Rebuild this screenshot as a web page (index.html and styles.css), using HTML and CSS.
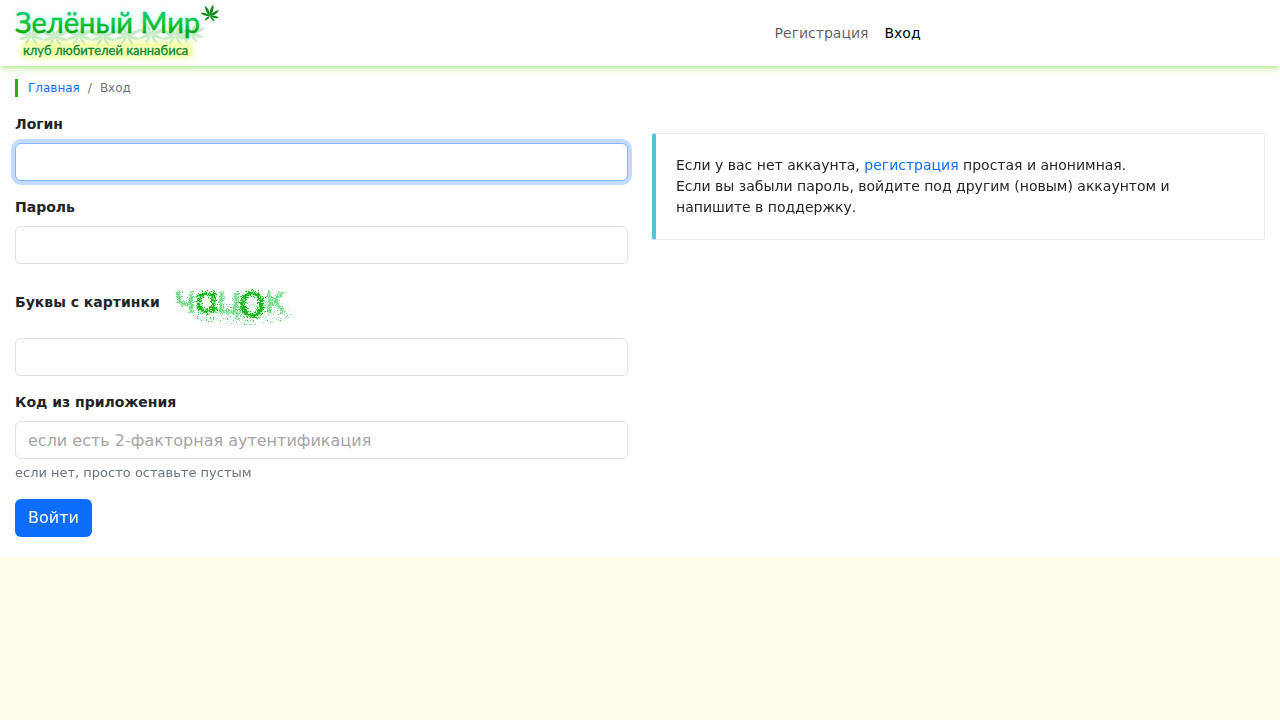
FILE: index.html
```html
<!DOCTYPE html>
<html lang="ru">
<head>
  <meta charset="UTF-8">
  <meta name="viewport" content="width=device-width, initial-scale=1">
  <title>Вход</title>
  <link rel="stylesheet" href="styles.css">
</head>
<body>
  <div class="page">
    <header class="header">
      <a class="logo" href="/" aria-label="Зелёный Мир">
        <svg width="210" height="66" viewBox="0 0 210 66">
          <defs>
            <linearGradient id="title" x1="0" y1="0" x2="0" y2="1">
              <stop offset="0.2" stop-color="#00cc80"/>
              <stop offset="0.5" stop-color="#12c83c"/>
              <stop offset="0.8" stop-color="#04aa10"/>
            </linearGradient>
            <filter id="glow" x="-20%" y="-60%" width="140%" height="220%">
              <feGaussianBlur stdDeviation="3"/>
            </filter>
            <path id="blade" d="M0 0C-2 -4 -2 -8 0 -12C2 -8 2 -4 0 0Z"/>
            <g id="leaf">
              <use href="#blade"/>
              <use href="#blade" transform="rotate(42) scale(.9)"/>
              <use href="#blade" transform="rotate(-42) scale(.95)"/>
              <use href="#blade" transform="rotate(85) scale(.75)"/>
              <use href="#blade" transform="rotate(-88) scale(.85)"/>
              <use href="#blade" transform="rotate(125) scale(.6)"/>
              <use href="#blade" transform="rotate(-145) scale(.6)"/>
            </g>
            <g id="fan">
              <use href="#blade" transform="rotate(-20) scale(.9)"/>
              <use href="#blade" transform="rotate(25) scale(.9)"/>
              <use href="#blade" transform="rotate(65) scale(1.3)"/>
              <use href="#blade" transform="rotate(-65) scale(1.3)"/>
              <use href="#blade" transform="rotate(105) scale(1.1)"/>
              <use href="#blade" transform="rotate(-105) scale(1.1)"/>
              <use href="#blade" transform="rotate(145) scale(.9)"/>
              <use href="#blade" transform="rotate(-145) scale(.9)"/>
            </g>
          </defs>
          <text class="logo-title logo-halo" x="0" y="33" filter="url(#glow)">Зелёный Мир</text>
          <rect x="6" y="42" width="172" height="16" rx="6" fill="#e6ff60" opacity=".7" filter="url(#glow)"/>
          <g fill="#a4dfa0" opacity=".6">
            <use href="#fan" transform="translate(16 36)"/>
            <use href="#fan" transform="translate(40 37)"/>
            <use href="#fan" transform="translate(64 36)"/>
            <use href="#fan" transform="translate(88 37)"/>
            <use href="#fan" transform="translate(112 36)"/>
            <use href="#fan" transform="translate(136 35)"/>
            <use href="#fan" transform="translate(160 36)"/>
            <use href="#fan" transform="translate(176 34)"/>
          </g>
          <text class="logo-title" x="0" y="33">Зелёный Мир</text>
          <text class="logo-sub logo-sub-halo" x="8" y="55">клуб любителей каннабиса</text>
          <text class="logo-sub" x="8" y="55">клуб любителей каннабиса</text>
          <use href="#leaf" transform="translate(195 16) rotate(16)" fill="#0c8c14"/>
        </svg>
      </a>
      <nav class="nav">
        <a class="nav-link" href="/register">Регистрация</a>
        <a class="nav-link active" href="/login">Вход</a>
      </nav>
    </header>

    <nav class="breadcrumb" aria-label="breadcrumb">
      <a href="/">Главная</a>
      <span>/</span>
      <span>Вход</span>
    </nav>

    <main class="content">
      <form class="login-form">
        <div class="field">
          <label for="login">Логин</label>
          <input type="text" id="login" name="login" autofocus>
        </div>
        <div class="field">
          <label for="password">Пароль</label>
          <input type="password" id="password" name="password">
        </div>
        <div class="field">
          <label class="captcha-label" for="captcha">
            <span class="captcha-title">Буквы с картинки</span>
            <svg class="captcha" width="120" height="50" viewBox="0 0 120 50" aria-hidden="true">
              <defs>
                <filter id="grain" x="-10%" y="-20%" width="120%" height="150%" color-interpolation-filters="sRGB">
                  <feTurbulence type="fractalNoise" baseFrequency="0.8" numOctaves="2" seed="4" result="noise"/>
                  <feDisplacementMap in="SourceGraphic" in2="noise" scale="12" xChannelSelector="R" yChannelSelector="G" result="spread"/>
                  <feGaussianBlur in="SourceGraphic" stdDeviation="1" result="soft"/>
                  <feComponentTransfer in="soft" result="faint">
                    <feFuncA type="linear" slope="0.5"/>
                  </feComponentTransfer>
                  <feMerge>
                    <feMergeNode in="faint"/>
                    <feMergeNode in="spread"/>
                  </feMerge>
                </filter>
                <filter id="dust" x="0" y="0" width="100%" height="100%" color-interpolation-filters="sRGB">
                  <feTurbulence type="fractalNoise" baseFrequency="0.7" numOctaves="1" seed="9"/>
                  <feColorMatrix values="0 0 0 0 .2  0 0 0 0 .8  0 0 0 0 .3  9 0 0 0 -5.4"/>
                  <feComposite in2="SourceGraphic" operator="in"/>
                </filter>
              </defs>
              <ellipse cx="66" cy="34" rx="50" ry="11" filter="url(#dust)"/>
              <g filter="url(#grain)">
                <text class="captcha-light" x="-2" y="33">ч</text>
                <text class="captcha-dark captcha-round" x="19" y="33">а</text>
                <text class="captcha-light" x="40" y="33" transform="rotate(5 50 25)">ц</text>
                <text class="captcha-dark captcha-big" x="62" y="37">о</text>
                <text class="captcha-light" x="88" y="33">к</text>
              </g>
            </svg>
          </label>
          <input type="text" id="captcha" name="captcha" autocomplete="off">
        </div>
        <div class="field">
          <label for="code">Код из приложения</label>
          <input type="text" id="code" name="code" placeholder="если есть 2-факторная аутентификация">
          <div class="help">если нет, просто оставьте пустым</div>
        </div>
        <button class="btn" type="submit">Войти</button>
      </form>

      <aside class="callout">
        Если у вас нет аккаунта, <a href="/register">регистрация</a> простая и анонимная.<br>
        Если вы забыли пароль, войдите под другим (новым) аккаунтом и напишите в поддержку.
      </aside>
    </main>
  </div>
</body>
</html>
```
FILE: styles.css
```css
* {
  box-sizing: border-box;
}
body {
  margin: 0;
  background: #fffbe9;
  color: #212529;
  font-family: "DejaVu Sans", sans-serif;
  font-size: 14px;
  line-height: 21px;
}
a {
  color: #0d6efd;
  text-decoration: none;
}
.page {
  background: #fff;
  padding-bottom: 20px;
}

/* header */
.header {
  display: grid;
  grid-template-columns: 3fr 2fr;
  gap: 4px;
  align-items: center;
  padding: 0 15px;
  box-shadow: 0 0 8px #7ee03c;
}
.logo svg {
  display: block;
  overflow: visible;
}
.logo-title {
  font-family: Lato, sans-serif;
  font-size: 29px;
  fill: url(#title);
  stroke: url(#title);
  stroke-width: 0.5;
}
.logo-halo {
  fill: #c4f6f4;
  stroke: #c4f6f4;
  stroke-width: 3;
  opacity: 0.6;
}
.logo-sub {
  font-family: Lato, sans-serif;
  font-size: 13px;
  fill: #078a28;
  stroke: #078a28;
  stroke-width: 0.3;
}
.logo-sub-halo {
  fill: #f6ffc0;
  stroke: #f6ffc0;
  stroke-width: 3;
}
.nav {
  display: flex;
}
.nav-link {
  padding: 8px;
  color: rgba(0, 0, 0, 0.65);
}
.nav-link.active {
  color: #000;
}

/* breadcrumb */
.breadcrumb {
  display: flex;
  gap: 8px;
  margin: 13px 15px 17px;
  padding-left: 10px;
  border-left: 3px solid #2eb200;
  color: #6c757d;
  font-size: 12px;
  line-height: 18px;
}

/* login */
.content {
  display: grid;
  grid-template-columns: 1fr 1fr;
  gap: 24px;
  align-items: start;
  padding: 0 15px;
}
.login-form {
  display: flex;
  flex-direction: column;
  align-items: flex-start;
  gap: 16px;
}
.field {
  width: 100%;
}
.field label {
  display: block;
  margin-bottom: 8px;
  font-weight: bold;
}
.field .captcha-label {
  display: flex;
  align-items: center;
  gap: 16px;
}
.captcha-title {
  padding-bottom: 6px;
}
.field input {
  display: block;
  width: 100%;
  height: 38px;
  padding: 6px 12px;
  border: 1px solid #dee2e6;
  border-radius: 6px;
  background: #fff;
  color: #212529;
  font: inherit;
  font-size: 16px;
}
.field input:focus {
  border-color: #86b7fe;
  outline: 0;
  box-shadow: 0 0 0 4px rgba(13, 110, 253, 0.25);
}
.field input::placeholder {
  color: #a5a5a5;
}
.captcha {
  overflow: visible;
}
.captcha text {
  font-family: "DejaVu Sans", sans-serif;
  font-size: 38px;
  font-weight: normal;
}
.captcha .captcha-round {
  font-family: Inter, "DejaVu Sans", sans-serif;
  font-feature-settings: "cv11";
}
.captcha .captcha-big {
  font-size: 46px;
}
.captcha-light {
  fill: #74dc88;
}
.captcha-dark {
  fill: #16b81c;
}
.help {
  margin-top: 4px;
  color: #6c757d;
  font-size: 13px;
  line-height: 20px;
}
.btn {
  padding: 7px 13px;
  border: 0;
  border-radius: 6px;
  background: #0d6efd;
  color: #fff;
  font: inherit;
  font-size: 16px;
  line-height: 24px;
  cursor: pointer;
}
.callout {
  margin-top: 19px;
  padding: 21px 40px 21px 20px;
  border: 1px solid #e9ecef;
  border-left: 4px solid #5bc0de;
  border-radius: 3px;
}
```
